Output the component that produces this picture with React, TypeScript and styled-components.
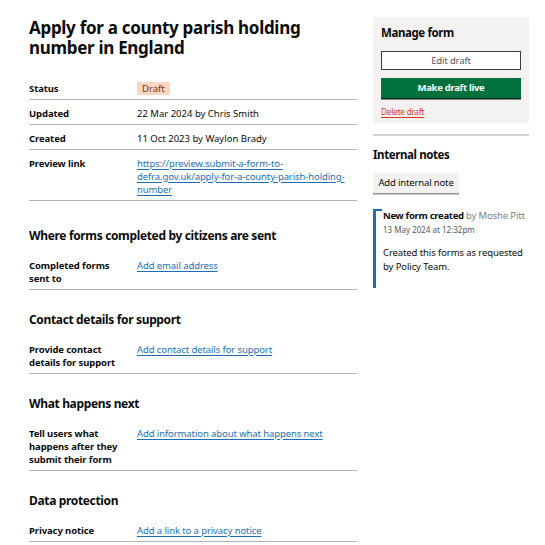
import React from "react";
import styled, { createGlobalStyle } from "styled-components";

const Global = createGlobalStyle`
  html, body { margin: 0; padding: 0; background: #ffffff; }
  body { font-family: "Noto Sans", "Liberation Sans", Arial, sans-serif; color: #0b0c0c; }
  * { box-sizing: border-box; }
`;

const Page = styled.div`
  display: flex;
  gap: 16px;
  padding: 17px 0 0 29px;
  width: 545px;
`;

const Main = styled.main`
  width: 328px;
  flex: none;
`;

const Side = styled.aside`
  width: 156px;
  flex: none;
`;

const Title = styled.h1`
  margin: 0 0 17px;
  font-size: 17px;
  line-height: 20px;
  font-weight: 700;
  letter-spacing: -0.3px;
  padding-top: 1px;
`;

const SectionHeading = styled.h2<{ $first?: boolean }>`
  margin: ${(p) => (p.$first ? "27px" : "22px")} 0 8px;
  font-size: 12px;
  line-height: 16px;
  font-weight: 700;
  letter-spacing: -0.35px;
`;

const List = styled.dl`
  margin: 0;
`;

const Row = styled.div`
  display: grid;
  grid-template-columns: 108px 1fr;
  padding: 6.5px 0 4.5px;
  border-bottom: 1px solid #b1b4b6;
  font-size: 9.5px;
  line-height: 13px;
`;

const Key = styled.dt`
  margin: 0;
  font-weight: 700;
  padding-right: 10px;
  letter-spacing: -0.1px;
`;

const Value = styled.dd`
  margin: 0;
`;

const Link = styled.a<{ $danger?: boolean }>`
  color: ${(p) => (p.$danger ? "#d4351c" : "#1d70b8")};
  text-decoration: underline;
  text-decoration-thickness: 1px;
  text-underline-offset: 1.5px;
  letter-spacing: -0.1px;
`;

const Tag = styled.span`
  display: inline-block;
  background: #fcd6c3;
  color: #6e3619;
  padding: 0 5px;
  line-height: 13px;
`;

const Panel = styled.section`
  background: #f3f2f1;
  padding: 8px 8px 6px;
`;

const PanelHeading = styled.h2`
  margin: 0 0 10px;
  font-size: 11.5px;
  line-height: 16px;
  font-weight: 700;
  letter-spacing: -0.4px;
`;

const Button = styled.button<{ $variant: "secondary" | "primary" | "grey" }>`
  display: block;
  width: ${(p) => (p.$variant === "grey" ? "86px" : "100%")};
  font-family: inherit;
  font-size: 9.5px;
  font-weight: ${(p) => (p.$variant === "primary" ? 700 : 400)};
  letter-spacing: ${(p) => (p.$variant === "primary" ? "-0.3px" : "-0.15px")};
  line-height: 12px;
  cursor: pointer;
  border-radius: 0;
  padding: 0;
  ${(p) =>
    p.$variant === "secondary"
      ? `background:#ffffff;color:#505a5f;border:1.5px solid #383f43;height:19px;margin-bottom:8px;`
      : p.$variant === "primary"
      ? `background:#00703c;color:#ffffff;border:none;height:20px;box-shadow:0 1.5px 0 #002d18;margin-bottom:9px;`
      : `background:#f3f2f1;color:#0b0c0c;border:none;height:20px;box-shadow:0 1.5px 0 #929191;`}
`;

const SmallLink = styled.div`
  font-size: 8px;
  line-height: 10px;
`;

const Rule = styled.hr`
  margin: 11px 0 0;
  border: none;
  height: 2px;
  background: #cfd1d2;
`;

const NotesHeading = styled.h2`
  margin: 11px 0 10px;
  font-size: 11.5px;
  line-height: 16px;
  font-weight: 700;
  letter-spacing: -0.4px;
`;

const Note = styled.article`
  position: relative;
  margin-top: 22px;
  border-left: 3px solid #1d70b8;
  padding: 0 0 14px 7px;
  font-size: 9.5px;
  line-height: 14px;
  &::before {
    content: "";
    position: absolute;
    left: -3px;
    top: 0;
    width: 9px;
    height: 2px;
    background: #1d70b8;
  }
`;

const NoteTitle = styled.div`
  margin-top: -6px;
  line-height: 13px;
  white-space: nowrap;
  letter-spacing: -0.15px;
  strong { font-weight: 700; letter-spacing: -0.3px; }
`;

const Muted = styled.span`
  color: #7b8186;
`;

const NoteDate = styled.div`
  font-size: 8px;
  line-height: 10px;
  color: #505a5f;
  margin: 3px 0 11px;
`;

const NoteBody = styled.p`
  margin: 0;
  line-height: 14px;
  letter-spacing: -0.1px;
`;

type Item = { key: string; value: React.ReactNode };

const sections: { title: string; items: Item[] }[] = [
  {
    title: "Where forms completed by citizens are sent",
    items: [{ key: "Completed forms sent to", value: <Link href="#">Add email address</Link> }],
  },
  {
    title: "Contact details for support",
    items: [
      {
        key: "Provide contact details for support",
        value: <Link href="#">Add contact details for support</Link>,
      },
    ],
  },
  {
    title: "What happens next",
    items: [
      {
        key: "Tell users what happens after they submit their form",
        value: <Link href="#">Add information about what happens next</Link>,
      },
    ],
  },
  {
    title: "Data protection",
    items: [{ key: "Privacy notice", value: <Link href="#">Add a link to a privacy notice</Link> }],
  },
];

const summary: Item[] = [
  { key: "Status", value: <Tag>Draft</Tag> },
  { key: "Updated", value: "22 Mar 2024 by Chris Smith" },
  { key: "Created", value: "11 Oct 2023 by Waylon Brady" },
  {
    key: "Preview link",
    value: (
      <Link href="#">
        https://preview.submit-a-form-to-
        <br />
        defra.gov.uk/apply-for-a-county-parish-holding-
        <br />
        number
      </Link>
    ),
  },
];

function SummaryList({ items }: { items: Item[] }) {
  return (
    <List>
      {items.map((it) => (
        <Row key={it.key}>
          <Key>{it.key}</Key>
          <Value>{it.value}</Value>
        </Row>
      ))}
    </List>
  );
}

export default function App() {
  return (
    <>
      <Global />
      <Page>
        <Main>
          <Title>
            Apply for a county parish holding
            <br />
            number in England
          </Title>
          <SummaryList items={summary} />
          {sections.map((s, i) => (
            <React.Fragment key={s.title}>
              <SectionHeading $first={i === 0}>{s.title}</SectionHeading>
              <SummaryList items={s.items} />
            </React.Fragment>
          ))}
        </Main>
        <Side>
          <Panel>
            <PanelHeading>Manage form</PanelHeading>
            <Button $variant="secondary">Edit draft</Button>
            <Button $variant="primary">Make draft live</Button>
            <SmallLink>
              <Link href="#" $danger>
                Delete draft
              </Link>
            </SmallLink>
          </Panel>
          <Rule />
          <NotesHeading>Internal notes</NotesHeading>
          <Button $variant="grey">Add internal note</Button>
          <Note>
            <NoteTitle>
              <strong>New form created</strong> <Muted>by Moshe Pitt</Muted>
            </NoteTitle>
            <NoteDate>13 May 2024 at 12:32pm</NoteDate>
            <NoteBody>
              Created this forms as requested
              <br />
              by Policy Team.
            </NoteBody>
          </Note>
        </Side>
      </Page>
    </>
  );
}
